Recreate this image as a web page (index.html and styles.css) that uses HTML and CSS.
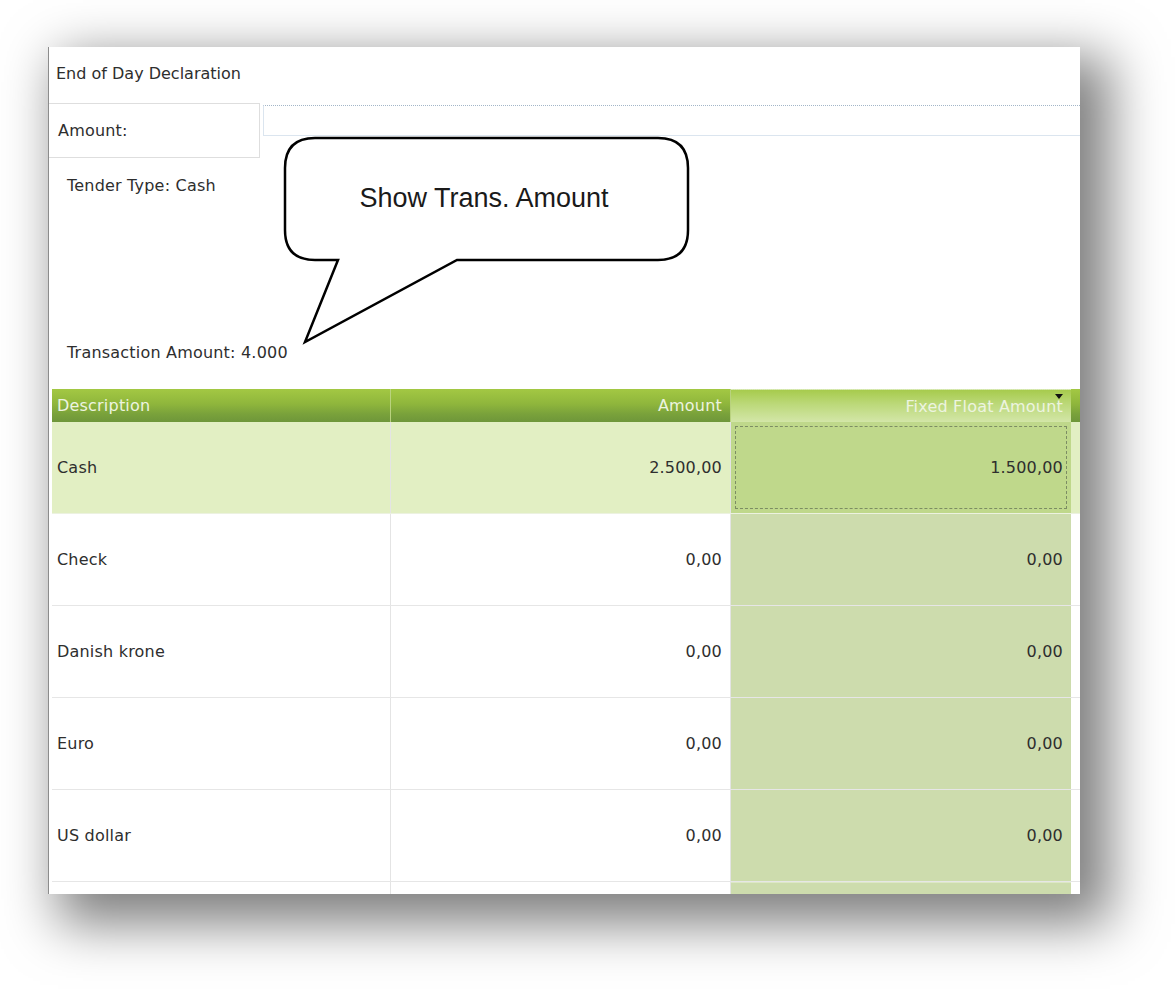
FILE: index.html
```html
<!DOCTYPE html>
<html>
<head>
<meta charset="utf-8">
<title>End of Day Declaration</title>
<link rel="stylesheet" href="styles.css">
</head>
<body>
<div class="card">
  <div class="title">End of Day Declaration</div>
  <div class="amount-row">
    <div class="amount-label">Amount:</div>
    <div class="amount-input"></div>
  </div>
  <div class="info">
    <div class="info-line">Tender Type: Cash</div>
    <div class="info-line">Transaction Amount: 4.000</div>
  </div>
  <div class="grid">
    <div class="row head">
      <div class="cell c1">Description</div>
      <div class="cell c2">Amount</div>
      <div class="cell c3">Fixed Float Amount<span class="sort"></span></div>
      <div class="cell c4"></div>
    </div>
    <div class="row sel">
      <div class="cell c1">Cash</div>
      <div class="cell c2">2.500,00</div>
      <div class="cell c3"><div class="focus">1.500,00</div></div>
      <div class="cell c4"></div>
    </div>
    <div class="row">
      <div class="cell c1">Check</div>
      <div class="cell c2">0,00</div>
      <div class="cell c3">0,00</div>
      <div class="cell c4"></div>
    </div>
    <div class="row">
      <div class="cell c1">Danish krone</div>
      <div class="cell c2">0,00</div>
      <div class="cell c3">0,00</div>
      <div class="cell c4"></div>
    </div>
    <div class="row">
      <div class="cell c1">Euro</div>
      <div class="cell c2">0,00</div>
      <div class="cell c3">0,00</div>
      <div class="cell c4"></div>
    </div>
    <div class="row">
      <div class="cell c1">US dollar</div>
      <div class="cell c2">0,00</div>
      <div class="cell c3">0,00</div>
      <div class="cell c4"></div>
    </div>
    <div class="row">
      <div class="cell c1"></div>
      <div class="cell c2"></div>
      <div class="cell c3"></div>
      <div class="cell c4"></div>
    </div>
  </div>
  <svg class="callout" width="415" height="214" viewBox="0 0 415 214">
    <path d="M35,5 H378 Q408,5 408,35 V97 Q408,127 378,127 H177 L25,209 L58,127 H35 Q5,127 5,97 V35 Q5,5 35,5 Z" fill="#fff" stroke="#000" stroke-width="2.5" stroke-linejoin="miter"/>
    <text x="204" y="74" text-anchor="middle" class="callout-text">Show Trans. Amount</text>
  </svg>
</div>
</body>
</html>
```
FILE: styles.css
```css
html, body {
  margin: 0;
  padding: 0;
  background: #fff;
  overflow: hidden;
}
body {
  width: 1175px;
  height: 989px;
  padding-top: 47px;
  padding-left: 48px;
  box-sizing: border-box;
  font-family: "DejaVu Sans", Verdana, sans-serif;
  font-size: 16px;
  letter-spacing: 0.2px;
  color: #2e2e2e;
}
.card {
  position: relative;
  width: 1032px;
  height: 847px;
  background: #fff;
  border-left: 1px solid #8c8c8c;
  box-sizing: border-box;
  overflow: hidden;
  box-shadow: 20px 20px 50px 10px rgba(0,0,0,0.5);
}
.title {
  height: 56px;
  line-height: 54px;
  padding-left: 7px;
  letter-spacing: 0;
}
.amount-row {
  display: flex;
  height: 56px;
}
.amount-label {
  width: 212px;
  height: 55px;
  margin-left: -1px;
  box-sizing: border-box;
  border: 1px solid #dedede;
  line-height: 53px;
  padding-left: 9px;
}
.amount-input {
  flex: 1;
  margin-left: 3px;
  margin-top: 2px;
  height: 31px;
  box-sizing: border-box;
  border: 1px solid #dbe5ef;
  border-top: 1px dotted #a3b6c8;
  border-right: none;
}
.info {
  height: 230px;
  padding: 17px 0 0 18px;
  box-sizing: border-box;
  display: flex;
  flex-direction: column;
  gap: 147px;
}
.info-line {
  height: 20px;
  line-height: 20px;
}
.grid {
  margin-left: 3px;
}
.row {
  display: flex;
  height: 92px;
  border-bottom: 1px solid #e6e6e6;
  box-sizing: border-box;
}
.cell {
  display: flex;
  align-items: center;
  box-sizing: border-box;
  padding: 0 8px 0 5px;
  border-right: 1px solid #e4e4e4;
  white-space: nowrap;
  flex-shrink: 0;
}
.c1 { width: 339px; }
.c2 { width: 340px; justify-content: flex-end; }
.c3 { width: 340px; justify-content: flex-end; background: #cddcad; border-right: none; position: relative; }
.c4 { flex: 1 1 auto; padding: 0; border-right: none; min-width: 0; }
.row.head {
  height: 33px;
  border-bottom: none;
  background: linear-gradient(#a3c843 0%, #8fb63c 45%, #7aa23b 75%, #6e963a 100%);
  color: #edf4e0;
}
.row.head .cell { border-right: 1px solid #b9d27e; }
.row.head .c3 {
  background: linear-gradient(#a7cb4d 0%, #bcd97a 45%, #d3e6a8 100%);
  border-top: 1px dotted #d8e9b4;
  border-right: none;
}
.row.head .c4 { border-right: none; }
.sort {
  position: absolute;
  right: 8px;
  top: 4px;
  width: 0;
  height: 0;
  border-left: 4px solid transparent;
  border-right: 4px solid transparent;
  border-top: 5px solid #111;
}
.row.sel {
  background: #e2efc3;
  border-bottom: 1px solid #ecf2e0;
}
.row.sel .c3 {
  background: #bfd88b;
  padding: 4px;
}
.focus {
  flex: 1;
  height: 100%;
  box-sizing: border-box;
  border: 1px dashed #7c8c63;
  display: flex;
  align-items: center;
  justify-content: flex-end;
  padding-right: 3px;
}
.row:last-child .c3 { border-top: 1px solid #dde8c6; }
.callout {
  position: absolute;
  left: 231px;
  top: 86px;
  overflow: visible;
}
.callout-text {
  font-family: "Liberation Sans", Arial, sans-serif;
  font-size: 27px;
  letter-spacing: 0;
  fill: #1a1a1a;
}
```
